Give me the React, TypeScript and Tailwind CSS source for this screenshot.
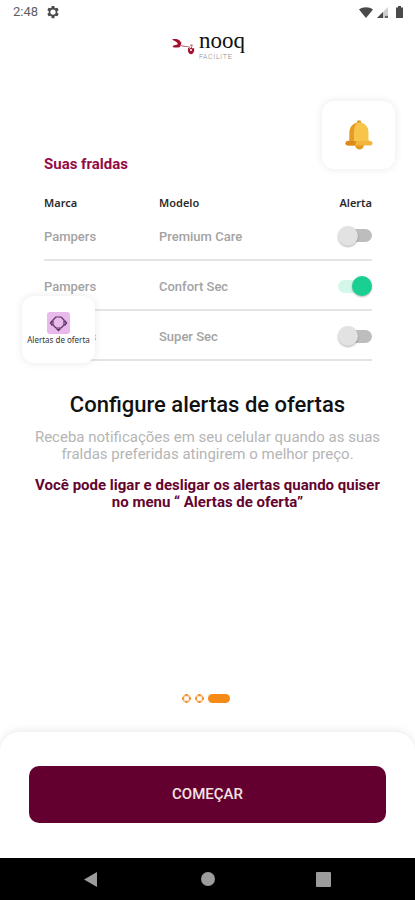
import { useState } from "react";

interface Diaper {
  id: number;
  brand: string;
  model: string;
  alert: boolean;
}

const initialDiapers: Diaper[] = [
  { id: 1, brand: "Pampers", model: "Premium Care", alert: false },
  { id: 2, brand: "Pampers", model: "Confort Sec", alert: true },
  { id: 3, brand: "Pampers", model: "Super Sec", alert: false },
];

const StatusBar = () => {
  return (
    <div className="flex h-6 items-center justify-between pr-3 pl-[13px] text-[#5f5f5f]">
      <div className="flex items-center gap-2">
        <span className="text-[13px] leading-4">2:48</span>
        <svg className="size-[14px]" viewBox="0 0 24 24" fill="#4a4a4a">
          <path
            fillRule="evenodd"
            d="M9.8 1.5h4.4l.6 3.1 1.7 1 3-1 2.2 3.8-2.4 2.1v2.9l2.4 2.1-2.2 3.8-3-1-1.7 1-.6 3.2H9.8l-.6-3.2-1.7-1-3 1-2.2-3.8 2.4-2.1v-2.9L2.3 8.4l2.2-3.8 3 1 1.7-1zM12 7.5a4.5 4.5 0 1 0 0 9 4.5 4.5 0 0 0 0-9z"
          />
        </svg>
      </div>
      <div className="flex items-center gap-1">
        <svg className="h-[11px] w-[14px]" viewBox="0 0 14 11" fill="#4a4a4a">
          <path d="M0 2.6C4-.6 10-.6 14 2.6L7 11z" />
        </svg>
        <svg className="size-[11px]" viewBox="0 0 11 11">
          <path d="M11 0v11H0z" fill="#cfcfcf" />
          <path d="M6 5v6H0z" fill="#4a4a4a" />
          <path d="M8 9l3 2M11 9l-3 2" stroke="#4a4a4a" />
        </svg>
        <svg className="ml-1 h-3 w-[7px]" viewBox="0 0 7 12" fill="#4a4a4a">
          <path d="M2 0h3v1.5h2V12H0V1.5h2z" />
        </svg>
      </div>
    </div>
  );
};

const Logo = () => {
  return (
    <div className="flex justify-center gap-1">
      <svg className="mt-2 h-5 w-6" viewBox="0 0 24 20">
        <path
          d="M1 3.5c2.500-.8 5.500-.5 7.500.8l2 2.700-1.500 4c-2.500.8-5.500.7-7.500 0l1-1.500 4-1V7L5 5.700z"
          fill="#a3122c"
        />
        <path
          d="M9.500 9.500l4 .8 3 .2 2.500 1"
          fill="none"
          stroke="#c4707e"
          strokeWidth="1.2"
        />
        <circle cx="20.5" cy="9.5" r="1.2" fill="#c4707e" />
        <path
          d="M17 12l2 .5 1.500-1.500 1 1.500 1.500-.5c.8 3.500-.7 6-2.900 6.200-2.200 0-3.600-2.700-3.100-6.200z"
          fill="#a3122c"
        />
        <circle cx="20" cy="14" r="1.100" fill="#fff" />
      </svg>
      <div className="w-[45px]">
        <p className="font-['Liberation_Serif',serif] text-[23px] leading-[25px] text-[#111]">
          nooq
        </p>
        <p className="text-[7px] leading-2 font-light tracking-widest text-[#8a8a8a]">
          FACILITE
        </p>
      </div>
    </div>
  );
};

const BellCard = () => {
  return (
    <div className="absolute top-[38px] right-5 flex h-[68px] w-[73px] items-center justify-center rounded-xl bg-white shadow-[0_0_8px_rgba(0,0,0,0.09)]">
      <svg className="h-[30px] w-7" viewBox="0 0 28 30">
        <path d="M10 25h9c-.3 2.6-2 4.5-4.5 4.5S10.3 27.6 10 25z" fill="#e39a1f" />
        <circle cx="14" cy="2.5" r="2.2" fill="#e39a26" />
        <path
          d="M14 2.5c6 0 9.5 4.5 9.5 10V19c0 1.500 1 2.500 3 3.500H1.500c2-1 3-2 3-3.500v-6.500c0-5.500 3.500-10 9.500-10z"
          fill="#f6c549"
        />
        <path
          d="M12.500 2.700C7.500 3.500 4.500 7.500 4.500 12.500V19c0 1.500-1 2.500-3 3.500h7c.8-2 .4-5 .4-9 0-5 1-9 3.600-10.800z"
          fill="#e79b25"
        />
        <rect x=".5" y="21" width="27" height="4.6" rx="2.3" fill="#f2b43a" />
        <path d="M2.8 21H11l-1 4.6H2.8a2.3 2.3 0 0 1 0-4.6z" fill="#dc8a1c" />
      </svg>
    </div>
  );
};

const OfferAlertCard = () => {
  return (
    <div className="absolute top-[100px] -left-[22px] flex h-[67px] w-[73px] flex-col items-center rounded-xl bg-white pt-4 shadow-[0_0_8px_rgba(0,0,0,0.09)]">
      <svg className="h-[22px] w-[23px]" viewBox="0 0 23 22">
        <rect width="23" height="22" rx="3" fill="#e8b9ea" />
        <path
          d="M9 5h5l3 3v5l-3 3H9l-3-3V8z"
          fill="none"
          stroke="#5b3266"
          strokeWidth="1.2"
          strokeLinejoin="round"
        />
        <path
          d="M5.500 8.500L3.500 11l2 2.500M17.500 8.500l2 2.500-2 2.500M9.500 16.500l2 2 2-2"
          fill="none"
          stroke="#5b3266"
          strokeWidth="1.4"
        />
      </svg>
      <p className="mt-[2px] font-['Noto_Sans',sans-serif] text-[8px] leading-2 whitespace-nowrap text-[#333]">
        Alertas de oferta
      </p>
    </div>
  );
};

const DiaperTable = () => {
  const [diapers, setDiapers] = useState<Diaper[]>(initialDiapers);

  const toggleAlert = (id: number) => {
    setDiapers(
      diapers.map((d) => (d.id === id ? { ...d, alert: !d.alert } : d))
    );
  };

  return (
    <div className="pt-[91px] pr-[43px] pl-11">
      <h2 className="text-[15px] leading-5 font-bold text-[#930c47]">
        Suas fraldas
      </h2>
      <div className="relative mt-[22px]">
        <table className="w-full table-fixed text-left text-[13px]">
          <thead className="font-['Noto_Sans',sans-serif] text-[11px] leading-[14px] text-[#2b2b2b]">
            <tr>
              <th className="w-[115px] font-semibold">Marca</th>
              <th className="font-semibold">Modelo</th>
              <th className="w-10 text-right font-semibold">Alerta</th>
            </tr>
          </thead>
          <tbody className="font-medium text-[#a3a3a3]">
            {diapers.map((d) => (
              <tr key={d.id} className="h-[50px] border-b-2 border-[#e4e4e6]">
                <td className="pt-1">{d.brand}</td>
                <td className="pt-1">{d.model}</td>
                <td className="pt-[2px]">
                  <input
                    type="checkbox"
                    role="switch"
                    aria-label={`Alerta ${d.model}`}
                    checked={d.alert}
                    onChange={() => toggleAlert(d.id)}
                    className="ml-auto flex h-5 w-[34px] cursor-pointer appearance-none items-center before:-mr-5 before:ml-1 before:h-[13px] before:w-[30px] before:shrink-0 before:rounded-full before:bg-[#bdbdbd] after:-ml-[14px] after:size-5 after:shrink-0 after:rounded-full after:bg-[#e2e2e2] after:shadow-[0_1px_2px_rgba(0,0,0,0.3)] checked:before:ml-0 checked:before:bg-[#d3f8ea] checked:after:ml-1 checked:after:bg-[#19cf92]"
                  />
                </td>
              </tr>
            ))}
          </tbody>
        </table>
        <OfferAlertCard />
      </div>
    </div>
  );
};

const Intro = () => {
  return (
    <div className="px-8 pt-7 text-center">
      <h1 className="text-[22px] leading-8 font-medium text-[#111]">
        Configure alertas de ofertas
      </h1>
      <p className="mt-2 text-[15px] leading-[17px] text-[#b5b5b5]">
        Receba notificações em seu celular quando as suas
        <br />
        fraldas preferidas atingirem o melhor preço.
      </p>
      <p className="mt-[14px] text-[15px] leading-[17px] font-bold text-[#64042f]">
        Você pode ligar e desligar os alertas quando quiser
        <br />
        no menu “ Alertas de oferta”
      </p>
    </div>
  );
};

const Dot = () => {
  return (
    <svg className="size-[9px]" viewBox="0 0 9 9" fill="none">
      <circle cx="4.5" cy="4.5" r="3.4" stroke="#f8b878" strokeWidth="1.6" />
      <path
        d="M4.500 0v2.200M4.500 6.800V9M0 4.500h2.200M6.800 4.500H9"
        stroke="#f4902a"
        strokeWidth="2.4"
      />
    </svg>
  );
};

const Pagination = () => {
  return (
    <div className="mt-auto flex justify-center gap-1 pr-1 pb-[29px]">
      <Dot />
      <Dot />
      <span className="h-[9px] w-[22px] rounded-full bg-[#f58a16]" />
    </div>
  );
};

const NavigationBar = () => {
  return (
    <nav className="flex h-[42px] items-center justify-between bg-black px-[84px]">
      <button aria-label="Voltar">
        <svg className="size-[15px]" viewBox="0 0 15 15" fill="#9c9c9c">
          <path d="M0 7.5L13 0v15z" />
        </svg>
      </button>
      <button aria-label="Início">
        <svg className="size-[14px]" viewBox="0 0 14 14" fill="#9c9c9c">
          <circle cx="7" cy="7" r="7" />
        </svg>
      </button>
      <button aria-label="Recentes">
        <svg className="size-[15px]" viewBox="0 0 15 15" fill="#9c9c9c">
          <rect width="15" height="15" rx="1" />
        </svg>
      </button>
    </nav>
  );
};

const App = () => {
  return (
    <div className="flex min-h-screen flex-col bg-white font-[Roboto,sans-serif]">
      <StatusBar />
      <header className="h-[39px] pt-1">
        <Logo />
      </header>
      <main className="relative flex flex-1 flex-col">
        <BellCard />
        <DiaperTable />
        <Intro />
        <Pagination />
      </main>
      <footer className="rounded-t-[20px] bg-white px-[29px] pt-[34px] pb-[35px] shadow-[0_-2px_8px_rgba(0,0,0,0.08)]">
        <button className="h-[57px] w-full cursor-pointer rounded-[10px] bg-[#64002f] text-[15px] font-medium text-[#f3e3e3]">
          COMEÇAR
        </button>
      </footer>
      <NavigationBar />
    </div>
  );
};

export default App;
